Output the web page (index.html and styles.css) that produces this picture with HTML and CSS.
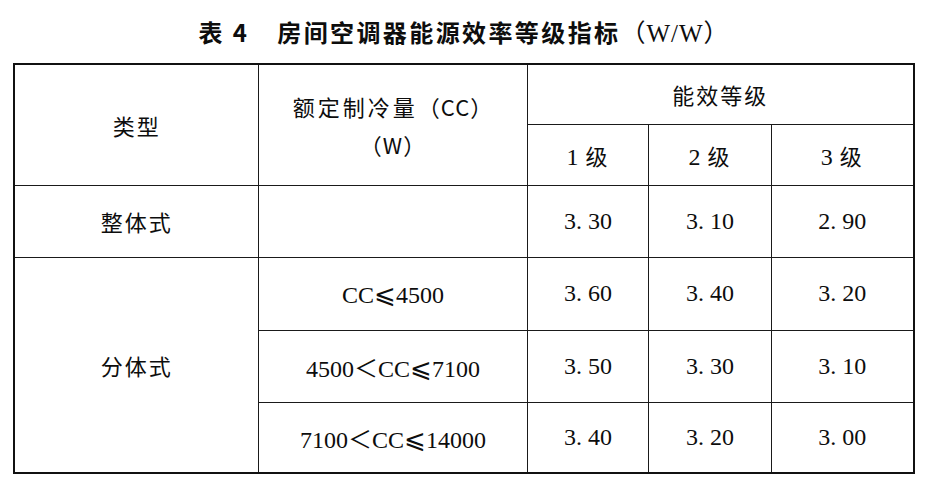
FILE: index.html
```html
<!DOCTYPE html>
<html lang="zh-CN">
<head>
<meta charset="utf-8">
<title>房间空调器能源效率等级指标</title>
<link rel="stylesheet" href="styles.css">
</head>
<body>
<h1 class="title">表 4<span class="gap"></span>房间空调器能源效率等级指标<span class="en">（W/W）</span></h1>
<table class="grade">
  <colgroup>
    <col class="c-type">
    <col class="c-cap">
    <col class="c-g1">
    <col class="c-g2">
    <col class="c-g3">
  </colgroup>
  <tr class="r-h1">
    <td class="zh" rowspan="2">类型</td>
    <td class="zh cap" rowspan="2">额定制冷量<span class="lat">（CC）</span><br><span class="lat">（W）</span></td>
    <td class="zh" colspan="3">能效等级</td>
  </tr>
  <tr class="r-h2">
    <td class="zh lvl"><span class="num">1</span> 级</td>
    <td class="zh lvl"><span class="num">2</span> 级</td>
    <td class="zh lvl"><span class="num">3</span> 级</td>
  </tr>
  <tr class="r-a">
    <td class="zh">整体式</td>
    <td></td>
    <td class="num">3. 30</td>
    <td class="num">3. 10</td>
    <td class="num">2. 90</td>
  </tr>
  <tr class="r-b">
    <td class="zh" rowspan="3">分体式</td>
    <td class="range">CC<span class="le">⩽</span>4500</td>
    <td class="num">3. 60</td>
    <td class="num">3. 40</td>
    <td class="num">3. 20</td>
  </tr>
  <tr class="r-c">
    <td class="range">4500<span class="lt">＜</span>CC<span class="le">⩽</span>7100</td>
    <td class="num">3. 50</td>
    <td class="num">3. 30</td>
    <td class="num">3. 10</td>
  </tr>
  <tr class="r-d">
    <td class="range">7100<span class="lt">＜</span>CC<span class="le">⩽</span>14000</td>
    <td class="num">3. 40</td>
    <td class="num">3. 20</td>
    <td class="num">3. 00</td>
  </tr>
</table>
</body>
</html>
```
FILE: styles.css
```css
html, body {
  margin: 0;
  padding: 0;
  background: #ffffff;
}

body {
  color: #0d0d0d;
  font-family: "Liberation Serif", "Noto Sans CJK SC", serif;
}

.title {
  margin: 17px 0 0;
  height: 30px;
  line-height: 30px;
  text-align: center;
  font-family: "Noto Sans CJK SC", sans-serif;
  font-size: 24px;
  font-weight: 700;
  letter-spacing: 2.4px;
}

.title .gap {
  display: inline-block;
  width: 28px;
}

.title .en {
  font-family: "Liberation Serif", "Noto Sans CJK SC", serif;
  font-size: 25px;
  font-weight: 400;
  letter-spacing: 1px;
}

.grade {
  border-collapse: collapse;
  table-layout: fixed;
  width: 899px;
  margin: 16px auto 0;
  border: 2.5px solid #111111;
}

.c-type { width: 244px; }
.c-cap { width: 269px; }
.c-g1 { width: 121px; }
.c-g2 { width: 123px; }
.c-g3 { width: 142px; }

.grade td {
  border: 1.5px solid #1a1a1a;
  padding: 0;
  text-align: center;
  vertical-align: middle;
}

.r-h1 { height: 60px; }
.r-h2 { height: 61px; }
.r-a { height: 72px; }
.r-b { height: 73px; }
.r-c { height: 72px; }
.r-d { height: 71px; }

.zh {
  font-family: "Noto Sans CJK SC", sans-serif;
  font-size: 22px;
  font-weight: 400;
  letter-spacing: 2px;
}

.cap {
  line-height: 38px;
  letter-spacing: 3px;
}

.lat {
  letter-spacing: 1px;
}

.lvl .num {
  font-family: "Liberation Serif", serif;
  font-size: 24px;
  font-weight: 400;
  letter-spacing: 0;
}

.num {
  font-family: "Liberation Serif", serif;
  font-size: 24px;
}

.range {
  font-family: "Liberation Serif", serif;
  font-size: 24px;
  letter-spacing: 0;
}

.range .le {
  font-family: "DejaVu Serif", "DejaVu Sans", serif;
  font-size: 26px;
  letter-spacing: 0;
}

.range .lt {
  font-family: "Noto Sans CJK SC", sans-serif;
  font-size: 24px;
  letter-spacing: 0;
}
```
